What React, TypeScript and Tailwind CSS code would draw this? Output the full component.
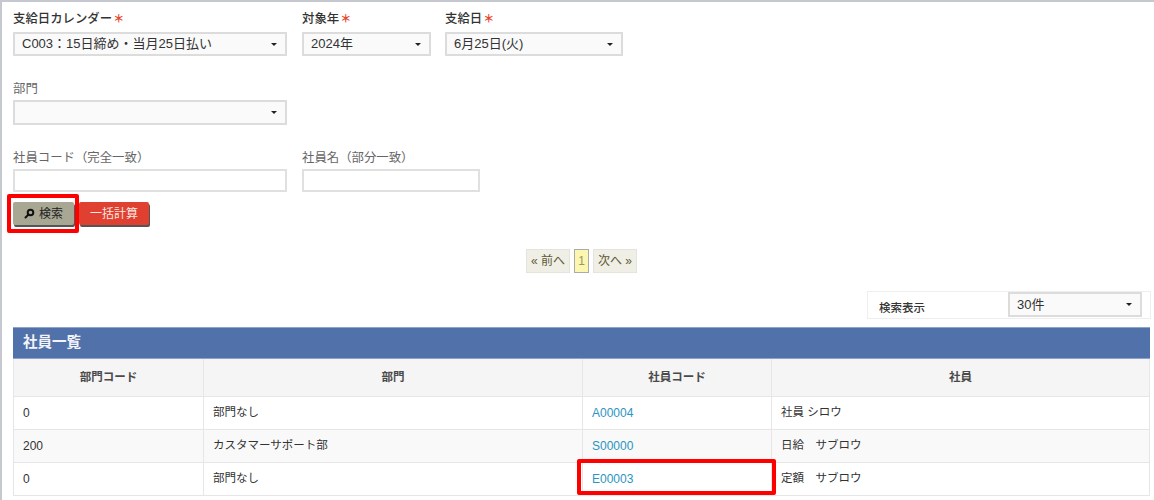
import React from "react";

const FONT = "font-['Liberation_Sans','Noto_Sans_CJK_JP',sans-serif]";

const rows = [
  { dept: "0", name: "部門なし", code: "A00004", staff: "社員 シロウ" },
  { dept: "200", name: "カスタマーサポート部", code: "S00000", staff: "日給　サブロウ" },
  { dept: "0", name: "部門なし", code: "E00003", staff: "定額　サブロウ" },
];

const Select: React.FC<{ value?: string; className: string }> = ({ value, className }) => (
  <div
    className={`flex items-center justify-between border-2 border-[#dcdcdc] bg-[#fafafa] pl-[7px] pr-[8px] text-[13px] text-[#333] ${className}`}
  >
    <span>{value}</span>
    <span className="border-x-[3px] border-t-[3px] border-x-transparent border-t-[#222]" />
  </div>
);

const Label: React.FC<{ text: string; required?: boolean; className?: string }> = ({
  text,
  required,
  className = "",
}) => (
  <div className={`flex h-[14px] items-center text-[12.4px] leading-[14px] ${required ? "font-medium text-[#333]" : "text-[#666]"} ${className}`}>
    {text}
    {required && <span className="ml-[1px] text-[11px] font-bold text-[#e8452c]">＊</span>}
  </div>
);

export default function App() {
  return (
    <div className={`${FONT} relative h-[500px] w-[1154px] overflow-hidden border-l-2 border-t-2 border-[#c6c8d0] bg-white pl-[11px]`}>
      {/* 検索条件 */}
      <div className="flex pt-[10px]">
        <div className="mr-[15px] w-[274px]">
          <Label text="支給日カレンダー" required className="mb-[6px]" />
          <Select value="C003：15日締め・当月25日払い" className="h-[24px] w-[274px]" />
        </div>
        <div className="mr-[13px] w-[130px]">
          <Label text="対象年" required className="mb-[6px]" />
          <Select value="2024年" className="h-[24px] w-[129px]" />
        </div>
        <div className="w-[178px]">
          <Label text="支給日" required className="mb-[6px]" />
          <Select value="6月25日(火)" className="h-[24px] w-[178px]" />
        </div>
      </div>

      <div className="pt-[26px]">
        <Label text="部門" className="mb-[4px]" />
        <Select className="h-[25px] w-[274px]" />
      </div>

      <div className="flex pt-[26px]">
        <div className="mr-[15px] w-[274px]">
          <Label text="社員コード（完全一致）" className="mb-[4px]" />
          <div className="h-[23px] w-[274px] border-2 border-[#e0e0e0] bg-white" />
        </div>
        <div className="w-[178px]">
          <Label text="社員名（部分一致）" className="mb-[4px]" />
          <div className="h-[23px] w-[178px] border-2 border-[#e0e0e0] bg-white" />
        </div>
      </div>

      {/* ボタン */}
      <div className="flex gap-[5px] pt-[10px]">
        <button className="flex h-[23px] w-[61px] items-center justify-center gap-[4px] rounded-[2px] bg-[#a8a793] text-[12px] text-[#222] shadow-[1px_2px_0_#555]">
          <svg width="11" height="11" viewBox="0 0 11 11" fill="none" stroke="#111" strokeWidth="2">
            <circle cx="6.5" cy="4.5" r="2.8" />
            <path d="M4.5 6.5 1.5 9.5" strokeLinecap="round" />
          </svg>
          検索
        </button>
        <button className="h-[23px] w-[70px] rounded-[2px] bg-[#e0402f] text-[12px] text-[#fde8e4] shadow-[1px_2px_0_#555]">
          一括計算
        </button>
      </div>

      {/* ページャー */}
      <div className="flex justify-center gap-[4px] pr-[4px] pt-[24px] text-[12px] text-[#5e5836]">
        <div className="flex h-[24px] w-[44px] items-center justify-center border border-[#e4e4dc] bg-[#efefe6]">« 前へ</div>
        <div className="flex h-[24px] w-[15px] items-center justify-center border border-[#aaa] bg-[#fbf6b0] text-[#9a9468]">1</div>
        <div className="flex h-[24px] w-[44px] items-center justify-center border border-[#e4e4dc] bg-[#efefe6]">次へ »</div>
      </div>

      {/* 表示件数 */}
      <div className="flex justify-end pr-[3px] pt-[18px]">
        <div className="flex h-[28px] w-[284px] items-start justify-between border border-[#eee] pr-[8px]">
          <span className="pl-[11px] pt-[9px] text-[11.5px] font-medium leading-[14px] text-[#333]">検索表示</span>
          <Select value="30件" className="h-[25px] w-[134px]" />
        </div>
      </div>

      {/* 社員一覧 */}
      <div className="w-[1137px] pt-[8px]">
        <div className="flex h-[32px] items-center border-y border-[#8fa3c8] bg-[#5171aa] pl-[10px] text-[14.5px] font-bold text-[#f2f4f8]">
          社員一覧
        </div>
        <table className="w-full table-fixed border-collapse text-[11.5px] text-[#333]">
          <colgroup>
            <col className="w-[190px]" />
            <col className="w-[379px]" />
            <col className="w-[189px]" />
            <col />
          </colgroup>
          <thead>
            <tr className="h-[37px] bg-[#f5f5f5] text-[#4a4a4a]">
              {["部門コード", "部門", "社員コード", "社員"].map((h) => (
                <th key={h} className="border border-t-0 border-[#e6e6e6] text-center font-bold">
                  {h}
                </th>
              ))}
            </tr>
          </thead>
          <tbody>
            {rows.map((r, i) => (
              <tr key={r.code} className={`h-[33px] ${i === 1 ? "bg-[#f9f9f9]" : "bg-white"}`}>
                <td className="border border-[#e6e6e6] pl-[9px] text-[12px]">{r.dept}</td>
                <td className="border border-[#e6e6e6] pl-[9px]">{r.name}</td>
                <td className="border border-[#e6e6e6] pl-[9px] text-[12px] text-[#2a95bf]">{r.code}</td>
                <td className="border border-[#e6e6e6] pl-[9px]">{r.staff}</td>
              </tr>
            ))}
          </tbody>
        </table>
      </div>

      {/* 赤枠の注釈 */}
      <div className="absolute left-[5px] top-[192px] h-[39px] w-[72px] rounded-[2px] border-[4px] border-[#ff0000]" />
      <div className="absolute left-[575px] top-[457px] h-[36px] w-[199px] rounded-[2px] border-[4px] border-[#ff0000]" />
    </div>
  );
}
